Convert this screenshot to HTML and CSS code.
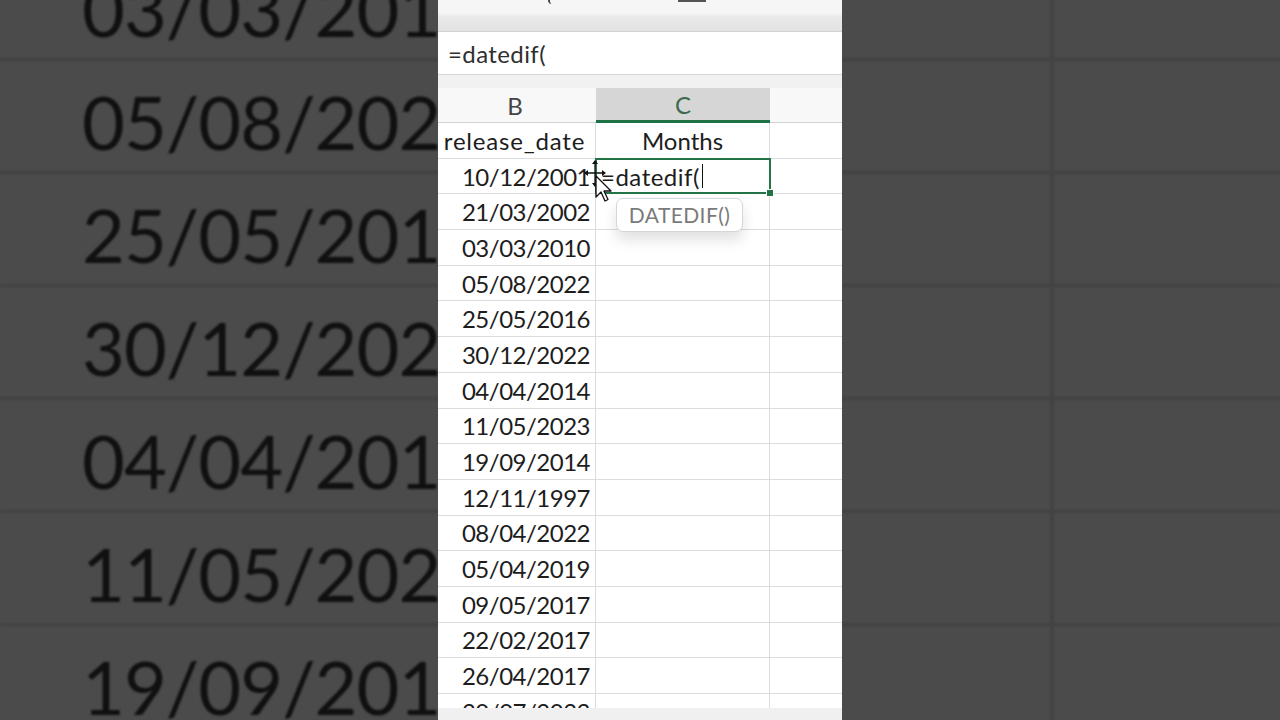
FILE: index.html
```html
<!DOCTYPE html>
<html lang="en">
<head>
  <meta charset="UTF-8" />
  <meta name="viewport" content="width=device-width, initial-scale=1.0" />
  <title>DATEDIF months</title>
  <link rel="stylesheet" href="styles.css">
</head>
<body>

  <div class="stage">

    <!-- blurred zoom of column B behind the video -->
    <div class="backdrop backdrop-left">
      <div class="bd-rows">
        <div class="bd-row">03/03/2010</div>
        <div class="bd-row">05/08/2022</div>
        <div class="bd-row">25/05/2016</div>
        <div class="bd-row">30/12/2022</div>
        <div class="bd-row">04/04/2014</div>
        <div class="bd-row">11/05/2023</div>
        <div class="bd-row">19/09/2014</div>
      </div>
    </div>

    <div class="sheet">
      <div class="ribbon">
        <span class="ribbon-glyph"></span>
        <span class="ribbon-line"></span>
      </div>
      <div class="formula-bar">=datedif(</div>
      <div class="gap"></div>

      <div class="grid">
        <div class="row head">
          <div class="cell col-b">B</div>
          <div class="cell col-c selected">C</div>
          <div class="cell col-d"></div>
        </div>
        <div class="row">
          <div class="cell col-b label">release_date</div>
          <div class="cell col-c label">Months</div>
          <div class="cell col-d"></div>
        </div>
        <div class="row">
          <div class="cell col-b date">10/12/2001</div>
          <div class="cell col-c active">
            <span class="entry">=datedif(<span class="caret"></span></span>
            <span class="handle"></span>
            <div class="tip">DATEDIF()</div>
            <svg class="pointer" width="30" height="46" viewBox="0 0 30 46">
              <g stroke="#111" stroke-width="1.3" fill="none">
                <path d="M11 3 V26 M2 14 H20" />
              </g>
              <path d="M11 1 L8 5 H14 Z M11 28 L8 24 H14 Z M0 14 L4 11 V17 Z M22 14 L18 11 V17 Z" fill="#111" />
              <path d="M12 17 V38 L17 33 L21 42 L24 40.5 L20 32 L27 32 Z" fill="#fff" stroke="#111" stroke-width="1.3" stroke-linejoin="round" />
            </svg>
          </div>
          <div class="cell col-d"></div>
        </div>
        <div class="row"><div class="cell col-b date">21/03/2002</div><div class="cell col-c"></div><div class="cell col-d"></div></div>
        <div class="row"><div class="cell col-b date">03/03/2010</div><div class="cell col-c"></div><div class="cell col-d"></div></div>
        <div class="row"><div class="cell col-b date">05/08/2022</div><div class="cell col-c"></div><div class="cell col-d"></div></div>
        <div class="row"><div class="cell col-b date">25/05/2016</div><div class="cell col-c"></div><div class="cell col-d"></div></div>
        <div class="row"><div class="cell col-b date">30/12/2022</div><div class="cell col-c"></div><div class="cell col-d"></div></div>
        <div class="row"><div class="cell col-b date">04/04/2014</div><div class="cell col-c"></div><div class="cell col-d"></div></div>
        <div class="row"><div class="cell col-b date">11/05/2023</div><div class="cell col-c"></div><div class="cell col-d"></div></div>
        <div class="row"><div class="cell col-b date">19/09/2014</div><div class="cell col-c"></div><div class="cell col-d"></div></div>
        <div class="row"><div class="cell col-b date">12/11/1997</div><div class="cell col-c"></div><div class="cell col-d"></div></div>
        <div class="row"><div class="cell col-b date">08/04/2022</div><div class="cell col-c"></div><div class="cell col-d"></div></div>
        <div class="row"><div class="cell col-b date">05/04/2019</div><div class="cell col-c"></div><div class="cell col-d"></div></div>
        <div class="row"><div class="cell col-b date">09/05/2017</div><div class="cell col-c"></div><div class="cell col-d"></div></div>
        <div class="row"><div class="cell col-b date">22/02/2017</div><div class="cell col-c"></div><div class="cell col-d"></div></div>
        <div class="row"><div class="cell col-b date">26/04/2017</div><div class="cell col-c"></div><div class="cell col-d"></div></div>
        <div class="row"><div class="cell col-b date">20/07/2023</div><div class="cell col-c"></div><div class="cell col-d"></div></div>
      </div>

      <div class="scrollbar"></div>
    </div>

    <!-- blurred zoom of the empty cells on the right -->
    <div class="backdrop backdrop-right">
      <div class="bd-rows">
        <div class="bd-row"><span class="bd-cell"></span></div>
        <div class="bd-row"><span class="bd-cell"></span></div>
        <div class="bd-row"><span class="bd-cell"></span></div>
        <div class="bd-row"><span class="bd-cell"></span></div>
        <div class="bd-row"><span class="bd-cell"></span></div>
        <div class="bd-row"><span class="bd-cell"></span></div>
        <div class="bd-row"><span class="bd-cell"></span></div>
      </div>
    </div>

  </div>

</body>
</html>
```

FILE: styles.css
```css
body {
  margin: 0;
  background: #4b4b4b;
  font-family: 'Lato', 'Open Sans', sans-serif;
  overflow: hidden;
}

.stage {
  display: grid;
  grid-template-columns: 438px 404px 438px;
  height: 720px;
  overflow: hidden;
}

/* ---------- blurred backdrop ---------- */

.backdrop {
  overflow: hidden;
  height: 720px;
  background: #4b4b4b;
}

.bd-rows {
  margin-top: -52px;
  filter: blur(1.2px);
}

.bd-row {
  height: 110px;
  border-bottom: 3.5px solid #424242;
  display: flex;
  align-items: center;
}

.backdrop-left .bd-row {
  height: 100px;
  padding-top: 10px;
  padding-left: 82px;
  font-size: 74px;
  color: #101010;
  white-space: nowrap;
  letter-spacing: -1px;
}

.backdrop-right .bd-row {
  align-items: stretch;
}

.bd-cell {
  width: 208px;
  margin-bottom: -4px;
  border-right: 4px solid #434343;
}

/* ---------- excel panel ---------- */

.sheet {
  background: #fff;
  display: flex;
  flex-direction: column;
  height: 720px;
  overflow: hidden;
}

.ribbon {
  height: 31px;
  flex-shrink: 0;
  background: linear-gradient(#f7f7f7 0, #f5f5f5 13px, #e9e9e9 17px, #e3e3e3 31px);
  border-bottom: 1px solid #d4d4d4;
  display: flex;
  align-items: flex-start;
}

.ribbon-glyph {
  width: 5px;
  height: 4px;
  margin-left: 110px;
  border-left: 2px solid #444;
  border-bottom-left-radius: 5px;
}

.ribbon-line {
  width: 28px;
  height: 2px;
  margin-left: 123px;
  background: #555;
}

.formula-bar {
  height: 42px;
  flex-shrink: 0;
  border-bottom: 1px solid #d6d6d6;
  display: flex;
  align-items: center;
  padding-left: 10px;
  font-size: 24px;
  letter-spacing: 0.4px;
  color: #2f2f2f;
}

.gap {
  height: 13px;
  flex-shrink: 0;
  background: #f1f1f1;
}

.grid {
  flex: 1;
  overflow: hidden;
  margin-left: -4px;
}

.row {
  display: flex;
  height: 35.7px;
  box-sizing: border-box;
  border-bottom: 1px solid #dcdcdc;
}

.cell {
  box-sizing: border-box;
  border-right: 1px solid #dcdcdc;
  display: flex;
  align-items: center;
  font-size: 24px;
  color: #1d1d1d;
}

.col-b { width: 162px; }
.col-c { width: 174px; }
.col-d { flex: 1; border-right: none; }

.row.head {
  height: 35px;
  background: #f8f8f8;
  border-bottom: 1px solid #d2d2d2;
}

.head .cell {
  justify-content: center;
  font-size: 24px;
  color: #444;
  border-right: none;
}

.head .selected {
  background: #d6d6d6;
  color: #3c6a50;
  border-bottom: 3px solid #1e7145;
  margin-bottom: -1px;
}

.label { justify-content: center; }

.col-b.label { letter-spacing: 0.8px; }

.date {
  justify-content: flex-end;
  padding-right: 5px;
  letter-spacing: -0.5px;
}

/* active cell with formula being typed */

.active {
  position: relative;
  padding-left: 5px;
  letter-spacing: 0.5px;
}

.active::after {
  content: "";
  position: absolute;
  left: -1px;
  top: -1px;
  right: -2px;
  bottom: -1px;
  border: 2px solid #227447;
  pointer-events: none;
}

.entry {
  display: flex;
  align-items: center;
}

.caret {
  width: 1px;
  height: 24px;
  margin-left: 2px;
  background: #111;
}

.handle {
  position: absolute;
  right: -5px;
  bottom: -4px;
  width: 6px;
  height: 6px;
  background: #227447;
  border: 1px solid #fff;
  z-index: 2;
}

.tip {
  position: absolute;
  left: 20px;
  top: 39px;
  width: 127px;
  height: 34px;
  box-sizing: border-box;
  background: #fff;
  border: 1px solid #d6d6d6;
  border-radius: 7px;
  box-shadow: 0 8px 14px rgba(0, 0, 0, 0.12);
  display: flex;
  align-items: center;
  justify-content: center;
  font-size: 21px;
  letter-spacing: 0.4px;
  color: #7a7a7a;
  z-index: 3;
}

.pointer {
  position: absolute;
  left: -12px;
  top: 0px;
  z-index: 4;
}

.scrollbar {
  height: 12px;
  flex-shrink: 0;
  background: #f0f0f0;
}
```
